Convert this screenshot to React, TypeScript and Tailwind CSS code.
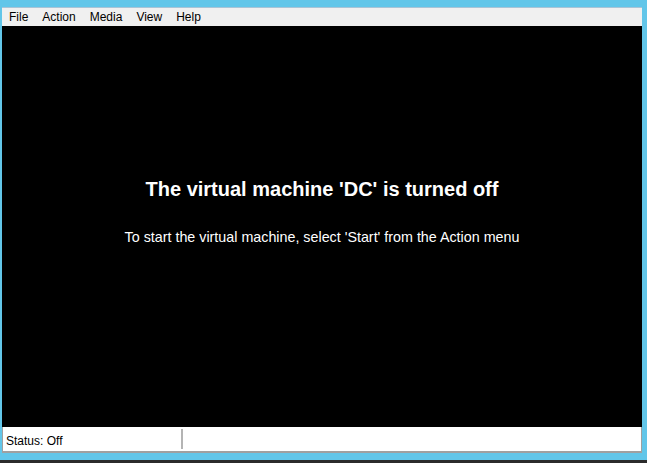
import React from "react";

const menuItems = ["File", "Action", "Media", "View", "Help"];

const App: React.FC = () => {
  return (
    <div
      className="w-[647px] h-[463px] bg-[#62c6e9] flex flex-col overflow-hidden"
      style={{ fontFamily: '"Liberation Sans", Arial, sans-serif' }}
    >
      <div className="flex-1 flex flex-col pt-[7px] pl-[2px] pr-[5px] pb-[7px]">
        <div className="flex-1 flex flex-col bg-[#f0f0f0] border-t border-[#a9c4d6]">
          {/* menu */}
          <div className="h-[18px] flex items-center pl-[7px] gap-[14px] text-[12px] text-black">
            {menuItems.map((item) => (
              <span key={item}>{item}</span>
            ))}
          </div>

          {/* screen */}
          <div className="flex-1 bg-black flex flex-col items-center justify-center pb-[30px]">
            <div className="text-white font-bold text-[20px] leading-none">
              The virtual machine 'DC' is turned off
            </div>
            <div className="text-white text-[14.3px] leading-none mt-[31px]">
              To start the virtual machine, select 'Start' from the Action menu
            </div>
          </div>

          {/* status bar */}
          <div className="h-[26px] bg-white border border-[#a0a0a0] border-t-0 border-b-2 flex items-stretch">
            <div className="w-[178px] flex items-center pl-[3px] pt-[3px] text-[12px] text-black">
              Status: Off
            </div>
            <div className="w-[2px] my-[2px] bg-[#b4b4b4]" />
            <div className="flex-1" />
          </div>
        </div>
      </div>
      <div className="h-[3px] bg-[#2b2b2b]" />
    </div>
  );
};

export default App;
